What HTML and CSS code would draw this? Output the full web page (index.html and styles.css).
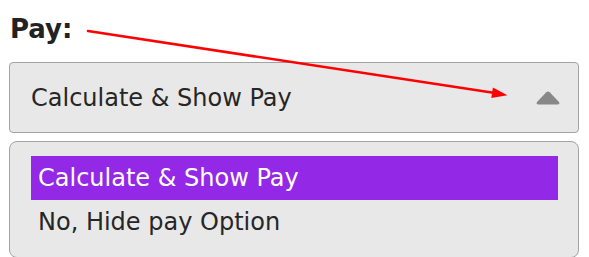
FILE: index.html
```html
<!DOCTYPE html>
<html>
<head>
<meta charset="utf-8">
<link rel="stylesheet" href="styles.css">
</head>
<body>
<div class="wrap">
  <div class="label">Pay:</div>
  <div class="select">
    <span class="value">Calculate &amp; Show Pay</span>
    <svg class="caret" width="24" height="14" viewBox="0 0 24 14"><path d="M10.3 1.2 Q12 -0.4 13.7 1.2 L23 11 Q24 13.5 21.5 13.5 L2.5 13.5 Q0 13.5 1 11 Z" fill="#888"/></svg>
  </div>
  <div class="dropdown">
    <div class="option selected">Calculate &amp; Show Pay</div>
    <div class="option">No, Hide pay Option</div>
  </div>
  <svg class="annot" width="589" height="257" viewBox="0 0 589 257">
    <line x1="88" y1="31" x2="495" y2="93" stroke="#ff0000" stroke-width="2.6" stroke-linecap="round"/>
    <polygon points="507.5,95.2 492.9,87.6 491.3,98" fill="#ff0000"/>
  </svg>
</div>
</body>
</html>
```

FILE: styles.css
```css
html, body {
  margin: 0;
  padding: 0;
  background: #ffffff;
}
body {
  width: 589px;
  height: 257px;
  overflow: hidden;
  font-family: "DejaVu Sans", "Liberation Sans", sans-serif;
  color: #262626;
}
.wrap {
  position: relative;
  padding: 0 10px 0 9px;
}
.label {
  font-weight: bold;
  font-size: 26px;
  line-height: 30px;
  padding-top: 14px;
  padding-left: 1px;
  height: 49px;
  box-sizing: border-box;
  color: #222;
}
.select {
  margin-top: 13px;
  height: 71px;
  box-sizing: border-box;
  border: 1px solid #a3a3a3;
  border-radius: 4px;
  background: #e8e8e8;
  display: flex;
  align-items: center;
  justify-content: space-between;
  padding: 0 18px 0 21px;
}
.value {
  font-size: 24px;
  line-height: 28px;
  margin-top: 1px;
}
.caret {
  display: block;
  margin-top: 1px;
}
.dropdown {
  margin-top: 8px;
  border: 1px solid #a3a3a3;
  border-radius: 8px;
  background: #e8e8e8;
  padding: 14px 20px 13px 21px;
}
.option {
  height: 44px;
  line-height: 44px;
  padding-left: 7px;
  font-size: 24px;
}
.option.selected {
  background: #9329e6;
  color: #ffffff;
}
.annot {
  position: absolute;
  left: 0;
  top: 0;
  pointer-events: none;
}
```
